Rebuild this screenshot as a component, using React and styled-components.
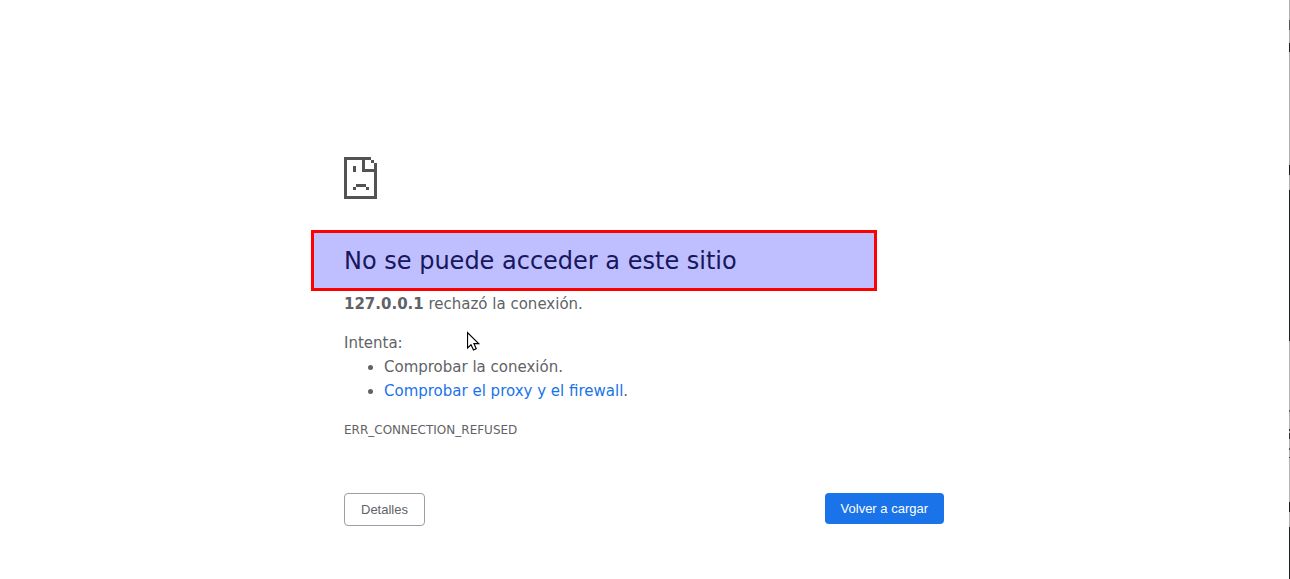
import React from 'react';
import styled, { createGlobalStyle } from 'styled-components';

const GlobalStyle = createGlobalStyle`
  * { box-sizing: border-box; }
  body {
    margin: 0;
    background: #fff;
    color: #5f6368;
    font-family: "DejaVu Sans", sans-serif;
    font-size: 15px;
    line-height: 24px;
  }
`;

const Page = styled.div`
  display: flex;
  min-height: 100vh;
`;

const Content = styled.main`
  flex: 1;
  display: flex;
  justify-content: center;
  padding: 157px 1px 0 0;
`;

const Column = styled.div`
  width: 100%;
  max-width: 600px;
`;

const WindowEdge = styled.div`
  width: 1px;
  background: linear-gradient(
    #b0b0b0 20px, #555 20px 30px, #b0b0b0 30px 43px, #202020 43px 52px,
    #b0b0b0 52px 165px, #1a1a1a 165px 175px, #b0b0b0 175px 190px,
    #1f2220 190px 341px, #b5b5b5 341px 410px, #606060 410px 412px,
    #b5b5b5 412px 429px, #333 429px 431px, #b5b5b5 431px 433px,
    #333 433px 439px, #b5b5b5 439px 448px, #555 448px 450px,
    #b5b5b5 450px 457px, #333 457px 458px, #b5b5b5 458px 502px,
    #1a1a1a 502px 512px, #b5b5b5 512px 527px, #1f2220 527px
  );
`;

const SadPage = styled.svg`
  display: block;
  width: 33px;
  height: 42px;
  fill: #535353;
`;

const Heading = styled.div`
  position: relative;
  margin-top: 47px;
`;

const Title = styled.h1`
  margin: 0 0 16px;
  color: #202124;
  font-size: 24px;
  font-weight: 400;
  line-height: 30px;
`;

const Highlight = styled.div`
  position: absolute;
  top: -16px;
  left: -33px;
  width: 566px;
  height: 61px;
  border: 3px solid #f00;
  background: rgba(0, 0, 255, 0.25);
  background-clip: padding-box;
  pointer-events: none;
`;

const Paragraph = styled.p`
  margin: 0 0 ${(p) => (p.$tight ? '0' : '15px')};
`;

const Suggestions = styled.ul`
  margin: 0 0 15px;
  padding-left: 40px;
`;

const Link = styled.a`
  color: #1a73e8;
  text-decoration: none;
`;

const ErrorCode = styled.div`
  font-size: 12px;
`;

const Actions = styled.div`
  display: flex;
  justify-content: space-between;
  align-items: flex-start;
  margin-top: 51px;
`;

const Button = styled.button`
  padding: 8px 16px;
  border: ${(p) => (p.$primary ? '0' : '1px solid #9aa0a6')};
  border-radius: 4px;
  background: ${(p) => (p.$primary ? '#1a73e8' : '#fff')};
  color: ${(p) => (p.$primary ? '#fff' : '#5f6368')};
  font: 13px/15px "Liberation Sans", sans-serif;
  cursor: pointer;
`;

const Pointer = styled.svg`
  position: absolute;
  top: 331px;
  left: calc(50% - 178px);
  width: 14px;
  height: 22px;
  pointer-events: none;
`;

export default function App() {
  return (
    <Page>
      <GlobalStyle />
      <Content>
        <Column>
          <SadPage viewBox="0 0 33 42" shapeRendering="crispEdges" aria-hidden="true">
            <path d="M0 0H27V3H21V12H33V42H0ZM3 3V39H30V15H18V3Z" fillRule="evenodd" />
            <path d="M27 3h3v3h-3zM30 6h3v6h-3zM9 9h3v6H9zM12 27h10v3H12zM9 30h3v3H9zM22 30h3v3h-3z" />
          </SadPage>
          <Heading>
            <Title>No se puede acceder a este sitio</Title>
            <Highlight />
          </Heading>
          <Paragraph>
            <strong>127.0.0.1</strong> rechazó la conexión.
          </Paragraph>
          <Paragraph $tight>Intenta:</Paragraph>
          <Suggestions>
            <li>Comprobar la conexión.</li>
            <li><Link href="#buttons">Comprobar el proxy y el firewall</Link>.</li>
          </Suggestions>
          <ErrorCode>ERR_CONNECTION_REFUSED</ErrorCode>
          <Actions id="buttons">
            <Button type="button">Detalles</Button>
            <Button type="button" $primary>Volver a cargar</Button>
          </Actions>
        </Column>
      </Content>
      <WindowEdge />
      <Pointer viewBox="0 0 14 22" aria-hidden="true">
        <path
          d="M.5 1.5V17l3.5-3.2 2.5 5.2 2.7-1.2L7 12.7h4.7Z"
          fill="#fff"
          stroke="#000"
          strokeWidth="1.2"
        />
      </Pointer>
    </Page>
  );
}
